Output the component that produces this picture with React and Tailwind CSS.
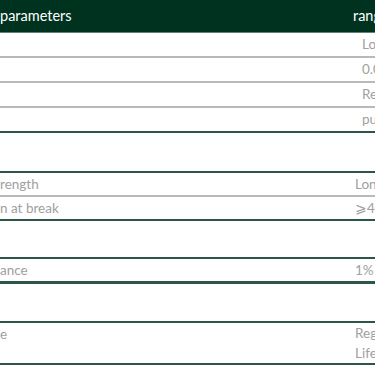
const firstRows = [
  { value: 'Low temperature', pad: 'pl-[362px]' },
  { value: '0.05 mm', pad: 'pl-[362px]' },
  { value: 'Red', pad: 'pl-[362px]' },
  { value: 'pure', pad: 'pl-[362px]' },
];

function Cell({ label, value, pad = 'pl-[355px]', h = 'h-[25px]', last, thick }) {
  return (
    <div
      className={`relative flex items-center ${h} ${
        last ? (thick ? 'border-b-[3px] border-[#2c5646]' : 'border-b-2 border-[#2c5646]') : 'border-b-2 border-[#b9b9b9]'
      }`}
    >
      {label && <span className="absolute left-0 whitespace-nowrap">{label}</span>}
      <span className={`${pad} whitespace-nowrap`}>{value}</span>
    </div>
  );
}

export default function App() {
  return (
    <div
      className="w-[375px] h-[366px] overflow-hidden bg-white text-[13.5px] text-[#a0a0a0]"
      style={{ fontFamily: 'Lato, "Noto Sans", sans-serif' }}
    >
      <div className="h-[33px] bg-[#00331f] flex items-center text-white text-[14.5px] border-b border-[#5f8276] relative">
        <span className="whitespace-nowrap">parameters</span>
        <span className="absolute left-[353px] whitespace-nowrap">range</span>
      </div>
      {firstRows.map((r, i) => (
        <Cell key={i} {...r} last={i === firstRows.length - 1} />
      ))}

      <div className="h-[38px]" />
      <div className="border-t-2 border-[#2c5646]">
        <Cell label="rength" value="Longitudinal" h="h-[24px]" />
        <Cell label="n at break" value="⩾400%" h="h-[24px]" last />
      </div>

      <div className="h-[36px]" />
      <div className="border-t-2 border-[#2c5646]">
        <Cell label="ance" value="1%" last thick />
      </div>

      <div className="h-[37px]" />
      <div className="border-t-2 border-[#2c5646]">
        <div className="relative h-[42px] border-b-2 border-[#2c5646] flex flex-col justify-center leading-[20px]">
          <span className="absolute left-0 top-[1px] whitespace-nowrap">e</span>
          <span className="pl-[355px] whitespace-nowrap">Regular</span>
          <span className="pl-[355px] whitespace-nowrap">Lifetime</span>
        </div>
      </div>
    </div>
  );
}
